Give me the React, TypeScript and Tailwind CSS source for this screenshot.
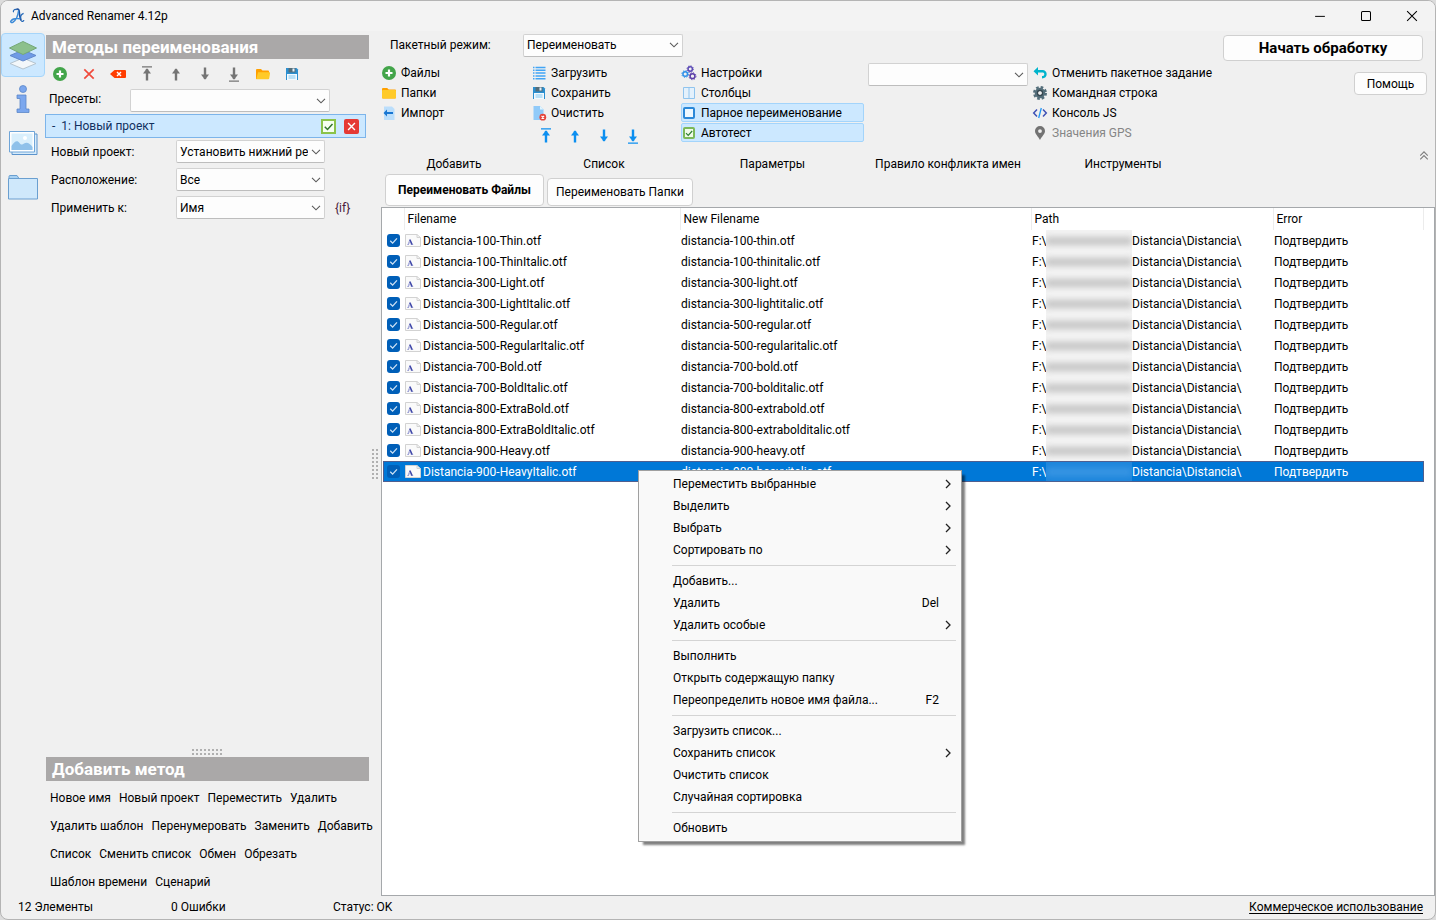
import React, { useState } from "react";

const files = [
  "Distancia-100-Thin.otf",
  "Distancia-100-ThinItalic.otf",
  "Distancia-300-Light.otf",
  "Distancia-300-LightItalic.otf",
  "Distancia-500-Regular.otf",
  "Distancia-500-RegularItalic.otf",
  "Distancia-700-Bold.otf",
  "Distancia-700-BoldItalic.otf",
  "Distancia-800-ExtraBold.otf",
  "Distancia-800-ExtraBoldItalic.otf",
  "Distancia-900-Heavy.otf",
  "Distancia-900-HeavyItalic.otf",
];

const methodRows = [
  ["Новое имя", "Новый проект", "Переместить", "Удалить"],
  ["Удалить шаблон", "Перенумеровать", "Заменить", "Добавить"],
  ["Список", "Сменить список", "Обмен", "Обрезать"],
  ["Шаблон времени", "Сценарий"],
];

type MenuEntry = { label: string; sub?: boolean; keys?: string };

const menuGroups: MenuEntry[][] = [
  [
    { label: "Переместить выбранные", sub: true },
    { label: "Выделить", sub: true },
    { label: "Выбрать", sub: true },
    { label: "Сортировать по", sub: true },
  ],
  [
    { label: "Добавить..." },
    { label: "Удалить", keys: "Del" },
    { label: "Удалить особые", sub: true },
  ],
  [
    { label: "Выполнить" },
    { label: "Открыть содержащую папку" },
    { label: "Переопределить новое имя файла...", keys: "F2" },
  ],
  [
    { label: "Загрузить список..." },
    { label: "Сохранить список", sub: true },
    { label: "Очистить список" },
    { label: "Случайная сортировка" },
  ],
  [{ label: "Обновить" }],
];

function Icon({ children, className = "size-4" }: { children: React.ReactNode; className?: string }) {
  return (
    <svg viewBox="0 0 16 16" className={`shrink-0 ${className}`} fill="none" aria-hidden="true">
      {children}
    </svg>
  );
}

const AppLogo = () => (
  <Icon>
    <path d="M7.2 1.600C8.600.4 10 1.200 10.200 3.200c.3 3.800.8 7 2 9.400" stroke="#1c4f9c" strokeWidth="1.600" />
    <path d="M9.600 2.500C9 7.500 6.600 12.600 3.800 14.300c-1.500.8-2.800-.4-1.700-1.600C3.600 11 7 10.200 11.400 10.800" stroke="#3b8ad8" strokeWidth="1.500" />
    <path d="M4.600 4.200C3.600 2.600 5.500 1 7.200 1.600M12.200 12.600c.7 1.400 2.600 1 2.600-.6M14.600 5.400c-2 .8-3.400 2.800-2.800 5.200" stroke="#2468b8" strokeWidth="1.200" />
  </Icon>
);

const AddIcon = () => (
  <Icon>
    <circle cx="8" cy="8" r="7" fill="#43a54a" />
    <path d="M8 4.500v7M4.500 8h7" stroke="#fff" strokeWidth="2.200" />
  </Icon>
);

const FolderIcon = () => (
  <Icon>
    <path d="M1 4a1 1 0 0 1 1-1h4.200l1.500 1.500H14a1 1 0 0 1 1 1V12.500a1 1 0 0 1-1 1H2a1 1 0 0 1-1-1z" fill="#ffa000" />
    <path d="M1 6a1 1 0 0 1 1-1h12a1 1 0 0 1 1 1v6.500a1 1 0 0 1-1 1H2a1 1 0 0 1-1-1z" fill="#ffca28" />
  </Icon>
);

const SaveIcon = () => (
  <Icon>
    <path d="M2 2h10.500L14 3.500V14H2z" fill="#2b8fd0" />
    <path d="M4.500 2h7v4.500h-7z" fill="#546e7a" />
    <path d="M8.500 2.500h2v3h-2z" fill="#e3f2fd" />
    <path d="M3 8h10v6H3z" fill="#f2faff" />
    <path d="M4.500 10h7M4.500 12h7" stroke="#81c7f0" />
  </Icon>
);

const OpenFolderIcon = () => (
  <Icon>
    <path d="M1 4a1 1 0 0 1 1-1h4l1.500 1.500H13a1 1 0 0 1 1 1V13H1z" fill="#ffa000" />
    <path d="M3 6.200h11.400c.5 0 .8.4.7.8L14.200 12.500c-.1.500-.5.800-1 .8H1.300z" fill="#ffca28" />
  </Icon>
);

// points up, flipped for down; bar is the "to the very end" line
function ArrowIcon({ down, bar, color }: { down?: boolean; bar?: boolean; color: string }) {
  return (
    <Icon className={down ? "size-4 rotate-180" : "size-4"}>
      <path d="M8 3v11.500" stroke={color} strokeWidth="2.400" />
      <path d="M4 7.500L8 2.200l4 5.300z" fill={color} />
      {bar && <path d="M3 .9h10" stroke={color} strokeWidth="1.200" />}
    </Icon>
  );
}

const ImportIcon = () => (
  <Icon>
    <path d="M3 1.500h8l2.500 2.500v11H3z" fill="#bbdefb" />
    <path d="M6 4.500L2.500 8 6 11.500V9h6V7H6z" fill="#1976d2" />
  </Icon>
);

const ListIcon = () => (
  <Icon>
    <path d="M4.500 2.500h10M4.500 5.300h10M4.500 8.100h10M4.500 10.900h10M4.500 13.700h10" stroke="#42a5f5" strokeWidth="1.500" />
    <path d="M2 2.500h1.500M2 5.300h1.500M2 8.100h1.500M2 10.900h1.500M2 13.700h1.500" stroke="#42a5f5" strokeWidth="1.500" />
  </Icon>
);

const ClearIcon = () => (
  <Icon>
    <path d="M2.500 1h6.500L12.500 4.500V15h-10z" fill="#90caf9" />
    <path d="M9 1v3.500h3.500z" fill="#e1f5fe" />
    <circle cx="11.800" cy="12.200" r="3.400" fill="#e5453b" />
    <path d="M10.500 10.900l2.600 2.600M13.100 10.900l-2.600 2.600" stroke="#fff" strokeWidth="1.200" />
  </Icon>
);

const SettingsIcon = () => (
  <Icon>
    <circle cx="4.200" cy="9" r="2.300" stroke="#2f8fe8" strokeWidth="1.500" />
    <circle cx="4.200" cy="9" r="3.400" stroke="#2f8fe8" strokeDasharray="1.200 1.470" />
    <circle cx="9.200" cy="4" r="2.200" stroke="#5c4bb5" strokeWidth="1.500" />
    <circle cx="9.200" cy="4" r="3.200" stroke="#5c4bb5" strokeDasharray="1.200 1.310" />
    <circle cx="11.500" cy="11.200" r="2.400" stroke="#5c3fa8" strokeWidth="1.500" />
    <circle cx="11.500" cy="11.200" r="3.500" stroke="#5c3fa8" strokeDasharray="1.200 1.550" />
  </Icon>
);

const ColumnsIcon = () => (
  <Icon>
    <path d="M2.500 2.500h11v11h-11zM8 2.500v11" fill="#e4f1fc" stroke="#90c4ee" />
  </Icon>
);

const UndoIcon = () => (
  <Icon>
    <path d="M1.500 6.200L6 2v2.900h4.500c2.500 0 4.200 1.700 4.200 4.200s-1.700 4.400-4.700 4.400v-2.400c1.400 0 2.300-.7 2.300-1.900s-.8-1.800-1.900-1.800H6v3z" fill="#00b4cc" />
  </Icon>
);

const GearIcon = () => (
  <Icon>
    <circle cx="8" cy="8" r="5.800" stroke="#546e7a" strokeWidth="2.400" strokeDasharray="2.600 1.950" />
    <circle cx="8" cy="8" r="3.700" stroke="#546e7a" strokeWidth="3.200" />
    <circle cx="8" cy="8" r="2.600" stroke="#37474f" strokeWidth="1.200" />
  </Icon>
);

const CodeIcon = () => (
  <Icon>
    <path d="M5 4.500L1.700 8 5 11.500M11 4.500L14.300 8 11 11.500" stroke="#3f51b5" strokeWidth="1.500" />
    <path d="M9.300 3L6.700 13" stroke="#2196f3" strokeWidth="1.300" />
  </Icon>
);

const PinIcon = () => (
  <Icon>
    <path d="M8 1a5 5 0 0 0-5 5c0 3.300 3.300 5.300 5 9 1.700-3.700 5-5.700 5-9a5 5 0 0 0-5-5zm0 3.200a1.900 1.900 0 1 1 0 3.800 1.900 1.900 0 0 1 0-3.800z" fill="#737373" fillRule="evenodd" />
  </Icon>
);

function Chevron() {
  return (
    <svg viewBox="0 0 10 6" className="pointer-events-none col-start-1 row-start-1 mr-1 h-[6px] w-[10px] justify-self-end self-center" fill="none">
      <path d="M1 .8l4 4 4-4" stroke="#5a5a5a" strokeWidth="1.100" />
    </svg>
  );
}

function Select({ id, value, className, label }: { id: string; value: string; className: string; label?: string }) {
  return (
    <span className={`grid ${className}`}>
      <select
        id={id}
        aria-label={label}
        className="col-start-1 row-start-1 h-[23px] w-full appearance-none rounded-xs border border-[#d2d2d2] border-b-[#bdbdbd] bg-[#fdfdfd] pl-[3px] pr-4 text-black"
      >
        <option>{value}</option>
      </select>
      <Chevron />
    </span>
  );
}

function CheckBox({ label, look, tick, checked = true, size }: { label?: string; look: string; tick: string; checked?: boolean; size: string }) {
  const [on, setOn] = useState(checked);
  return (
    <span className="inline-grid shrink-0 place-items-center align-middle">
      <input
        type="checkbox"
        aria-label={label}
        checked={on}
        onChange={() => setOn(!on)}
        className={`col-start-1 row-start-1 appearance-none ${size} ${look}`}
      />
      {on && (
        <svg viewBox="0 0 12 12" className={`pointer-events-none col-start-1 row-start-1 ${size}`} fill="none">
          <path d="M3 6.200l2.200 2.200L9.200 4" stroke={tick} strokeWidth="1.200" />
        </svg>
      )}
    </span>
  );
}

function ToolItem({ icon, text, muted }: { icon: React.ReactNode; text: string; muted?: boolean }) {
  return (
    <button disabled={muted} className={`flex h-5 items-center gap-1 whitespace-nowrap ${muted ? "text-[#858585]" : ""}`}>
      {icon}
      {text}
    </button>
  );
}

function ToolGroup({ title, className, children }: { title: string; className: string; children: React.ReactNode }) {
  return (
    <section className={`flex h-full flex-col ${className}`}>
      <div className="flex flex-1 flex-col">{children}</div>
      <h3 className="text-center leading-5 whitespace-nowrap">{title}</h3>
    </section>
  );
}

function RailIcons() {
  return (
    <nav className="flex w-11 shrink-0 flex-col pt-[2px]">
      <button aria-label="Методы" className="grid h-11 place-items-center rounded-sm border border-[#a6d5fa] bg-[#cce8ff]">
        <svg viewBox="0 0 30 32" className="h-8 w-[30px]">
          <path d="M15 19l13 5.500L15 30 2 24.500z" fill="#f3f7fa" stroke="#b5c4cf" />
          <path d="M15 11l13 5.500L15 22 2 16.500z" fill="#6f9be6" stroke="#6288cc" />
          <path d="M15 2.500L28.500 9 15 15.500 1.500 9z" fill="#8cc08d" stroke="#74a877" />
        </svg>
      </button>
      <button aria-label="Информация" className="grid h-11 place-items-center">
        <svg viewBox="0 0 14 28" className="h-7 w-[14px]" fill="#7ba7ee" stroke="#5b87c8" strokeWidth=".8">
          <circle cx="7" cy="4" r="3.500" />
          <path d="M1 10h9v14h3v3.500H1V24h3V13.500H1z" />
        </svg>
      </button>
      <button aria-label="Изображения" className="grid h-11 place-items-center">
        <svg viewBox="0 0 30 26" className="h-[26px] w-[30px]" fill="none">
          <path d="M4 4h25v20.500H4z" fill="#d7ebfa" stroke="#5b93cc" />
          <path d="M1.500 1.500h25v20.500h-25z" fill="#fff" stroke="#6fa5d8" />
          <path d="M3.500 3.500h21v16.500h-21z" fill="#d9effc" />
          <path d="M3.500 16c3-5 6-6 8-3 1.500 2 3 2 4.500.5 3-2 6 0 8.500 3.500v3h-21z" fill="#8fc1ea" />
          <circle cx="17" cy="8" r="2" fill="#fff" />
        </svg>
      </button>
      <button aria-label="Папка" className="grid h-11 place-items-center">
        <svg viewBox="0 0 30 26" className="h-[26px] w-[30px]" fill="none" stroke="#6a9fd0">
          <path d="M1 4.500V2.500c0-.6.400-1 1-1h7l2 3z" fill="#a9d2f3" />
          <path d="M.5 4.500h29V25H.5z" fill="#cfe8fb" />
        </svg>
      </button>
    </nav>
  );
}

function MethodsPanel() {
  const [preset] = useState("");
  return (
    <aside className="flex w-[324px] shrink-0 flex-col">
      <h2 className="mt-1 ml-px h-6 bg-[#aaa8a8] pl-[6px] text-[17px] leading-6 font-bold text-white">Методы переименования</h2>
      <div className="flex h-[29px] items-center">
        <button aria-label="Добавить" className="flex w-[29px] justify-center"><AddIcon /></button>
        <button aria-label="Удалить" className="flex w-[29px] justify-center">
          <Icon><path d="M3.300 3.300l9.400 9.400M12.700 3.300l-9.400 9.400" stroke="#f04a3c" strokeWidth="1.700" /></Icon>
        </button>
        <button aria-label="Удалить все" className="flex w-[29px] justify-center">
          <Icon>
            <path d="M0 8l4.500-4H15a1 1 0 0 1 1 1v6a1 1 0 0 1-1 1H4.500z" fill="#ff3d00" />
            <path d="M7 6l4 4M11 6l-4 4" stroke="#fff" strokeWidth="1.400" />
          </Icon>
        </button>
        <button aria-label="В начало" className="flex w-[29px] justify-center"><ArrowIcon bar color="#757575" /></button>
        <button aria-label="Вверх" className="flex w-[29px] justify-center"><ArrowIcon color="#757575" /></button>
        <button aria-label="Вниз" className="flex w-[29px] justify-center"><ArrowIcon down color="#757575" /></button>
        <button aria-label="В конец" className="flex w-[29px] justify-center"><ArrowIcon down bar color="#757575" /></button>
        <button aria-label="Открыть" className="flex w-[29px] justify-center"><OpenFolderIcon /></button>
        <button aria-label="Сохранить" className="flex w-[29px] justify-center"><SaveIcon /></button>
      </div>
      <div className="flex h-[26px] items-start justify-between pt-px pl-1 pr-[39px]">
        <label htmlFor="preset" className="leading-5">Пресеты:</label>
        <Select id="preset" value={preset} className="w-[200px]" />
      </div>
      <div className="mr-[3px] flex h-6 items-center gap-2 border border-[#7cb4ea] bg-[#cce8ff] pr-[6px] pl-[6px] text-[#12305e]">
        <span className="flex-1 whitespace-pre">-  1: Новый проект</span>
        <CheckBox label="Включить метод" size="size-[15px]" look="border-2 border-[#8bc34a] bg-[#f6fff0]" tick="#33752c" />
        <button aria-label="Удалить метод" className="grid size-[15px] place-items-center rounded-xs bg-[#e53935]">
          <Icon className="size-[11px]"><path d="M3 3l10 10M13 3L3 13" stroke="#fff" strokeWidth="2" /></Icon>
        </button>
      </div>
      <div className="flex flex-col gap-[5px] pt-[2px] pl-[6px]">
        <div className="flex h-[23px] items-center">
          <label htmlFor="case" className="w-[125px]">Новый проект:</label>
          <Select id="case" value="Установить нижний ре" className="w-[149px]" />
        </div>
        <div className="flex h-[23px] items-center">
          <label htmlFor="place" className="w-[125px]">Расположение:</label>
          <Select id="place" value="Все" className="w-[149px]" />
        </div>
        <div className="flex h-[23px] items-center">
          <label htmlFor="apply" className="w-[125px]">Применить к:</label>
          <Select id="apply" value="Имя" className="w-[149px]" />
          <button className="ml-[10px] text-[#4a1a3a]">{"{if}"}</button>
        </div>
      </div>

      {/* Add method */}
      <div className="mt-auto h-2 w-8 self-center bg-[radial-gradient(#b0b0b0_1px,transparent_1px)] bg-[size:4px_4px]" />
      <h2 className="mt-px ml-px h-6 bg-[#aaa8a8] pl-[6px] text-[17px] leading-6 font-bold text-white">Добавить метод</h2>
      <div className="pt-[3px] pl-[5px]">
        {methodRows.map((row, i) => (
          <div key={i} className="flex h-7 items-center gap-2 whitespace-nowrap">
            {row.map((m) => (
              <button key={m}>{m}</button>
            ))}
          </div>
        ))}
      </div>
    </aside>
  );
}

function Ribbon() {
  return (
    <header className="flex">
      <div className="flex-1">
        <div className="mb-1 flex h-7 items-center pl-[9px]">
          <label htmlFor="mode" className="w-[133px] whitespace-nowrap">Пакетный режим:</label>
          <Select id="mode" value="Переименовать" className="w-[160px]" />
        </div>
        <div className="flex h-[111px] gap-1">
          <ToolGroup title="Добавить" className="w-[146px]">
            <ToolItem icon={<AddIcon />} text="Файлы" />
            <ToolItem icon={<FolderIcon />} text="Папки" />
            <ToolItem icon={<ImportIcon />} text="Импорт" />
          </ToolGroup>
          <ToolGroup title="Список" className="w-[146px]">
            <ToolItem icon={<ListIcon />} text="Загрузить" />
            <ToolItem icon={<SaveIcon />} text="Сохранить" />
            <ToolItem icon={<ClearIcon />} text="Очистить" />
            <div className="flex h-[26px] items-center">
              <button aria-label="В начало списка" className="flex w-[29px] justify-center"><ArrowIcon bar color="#0c8ff0" /></button>
              <button aria-label="Выше" className="flex w-[29px] justify-center"><ArrowIcon color="#0c8ff0" /></button>
              <button aria-label="Ниже" className="flex w-[29px] justify-center"><ArrowIcon down color="#0c8ff0" /></button>
              <button aria-label="В конец списка" className="flex w-[29px] justify-center"><ArrowIcon down bar color="#0c8ff0" /></button>
            </div>
          </ToolGroup>
          <ToolGroup title="Параметры" className="w-[183px]">
            <ToolItem icon={<SettingsIcon />} text="Настройки" />
            <ToolItem icon={<ColumnsIcon />} text="Столбцы" />
            <label className="mb-px flex h-[19px] items-center gap-[6px] rounded-xs border border-[#a3d4fb] bg-[#cce8ff] pl-px">
              <CheckBox checked={false} size="size-3" look="rounded-xs border-2 border-[#2b88d8] bg-[#eef8ff]" tick="#1565c0" />
              Парное переименование
            </label>
            <label className="mb-px flex h-[19px] items-center gap-[6px] rounded-xs border border-[#a3d4fb] bg-[#cce8ff] pl-px">
              <CheckBox size="size-3" look="rounded-xs border-2 border-[#7cb95a] bg-[#f0fbe8]" tick="#2e7d32" />
              Автотест
            </label>
          </ToolGroup>
          <ToolGroup title="Правило конфликта имен" className="w-[160px]">
            <Select id="conflict" value="" label="Правило конфликта имен" className="w-full" />
          </ToolGroup>
          <ToolGroup title="Инструменты" className="w-[182px]">
            <ToolItem icon={<UndoIcon />} text="Отменить пакетное задание" />
            <ToolItem icon={<GearIcon />} text="Командная строка" />
            <ToolItem icon={<CodeIcon />} text="Консоль JS" />
            <ToolItem icon={<PinIcon />} text="Значения GPS" muted />
          </ToolGroup>
        </div>
      </div>
      <div className="flex flex-col items-end pt-1">
        <button className="mr-3 h-[26px] w-[200px] rounded-sm border border-[#d0d0d0] bg-[#fdfdfd] text-[15px] font-bold">Начать обработку</button>
        <button className="mt-[11px] mr-2 h-[23px] w-[73px] rounded-sm border border-[#d0d0d0] bg-[#fdfdfd]">Помощь</button>
        <button aria-label="Свернуть" className="mt-auto mr-[5px] mb-3">
          <Icon className="size-3"><path d="M3 7.500l5-5 5 5M3 12.500l5-5 5 5" stroke="#7d7d7d" strokeWidth="1.500" /></Icon>
        </button>
      </div>
    </header>
  );
}

function FileTable() {
  return (
    <div className="pr-[10px] pl-px">
      <table className="w-full table-fixed border-collapse text-left whitespace-nowrap">
        <colgroup>
          <col className="w-[21px]" />
          <col className="w-[276px]" />
          <col className="w-[351px]" />
          <col className="w-[242px]" />
          <col />
        </colgroup>
        <thead>
          <tr className="h-[22px]">
            <th className="border-r border-[#ececec] p-0" />
            <th className="border-r border-[#ececec] p-0 pl-[3px] font-normal">Filename</th>
            <th className="border-r border-[#ececec] p-0 pl-[3px] font-normal">New Filename</th>
            <th className="border-r border-[#ececec] p-0 pl-[3px] font-normal">Path</th>
            <th className="border-r border-[#ececec] p-0 pl-[3px] font-normal">Error</th>
          </tr>
        </thead>
        <tbody>
          {files.map((name, i) => {
            const active = i === files.length - 1;
            return (
              <tr key={name} className={`h-[21px] ${active ? "bg-[#0078d7] text-white outline-1 -outline-offset-1 outline-[#4f5f8f]" : ""}`}>
                <td className="p-0 pl-1">
                  <span className="flex">
                    <CheckBox label={name} size="size-[13px]" look="rounded-[3px] bg-[#005fb8]" tick="#cfe3f5" />
                  </span>
                </td>
                <td className="p-0">
                  <span className="flex items-center gap-[2px] pl-px">
                    <svg viewBox="0 0 16 13" className="h-[13px] w-4" fill="none">
                      <path d="M.5.500h11.500l3.500 3v9H.5z" fill="#fafafa" stroke="#d2d2d2" />
                      <path d="M12 .5v3h3.500" stroke="#d2d2d2" />
                      <path d="M3 10.500L4.800 6M3.800 8.900h3M2.400 10.500h1.600M5.800 10.500h2.400" stroke="#8a8fce" strokeWidth=".8" />
                      <path d="M4.800 5.500l2.300 5" stroke="#3f47a8" strokeWidth="1.500" />
                    </svg>
                    {name}
                  </span>
                </td>
                <td className="p-0 pl-px">{name.toLowerCase()}</td>
                <td className="p-0 pl-px">
                  <span className="flex h-[21px] items-center">
                    <span className="w-[14px]">{"F:\\"}</span>
                    <span className={`flex h-[21px] w-[86px] items-center overflow-hidden ${active ? "bg-[#1d86dc]" : "bg-[#f3f3f3]"}`}>
                      <span className={`h-2 w-full blur-[3px] ${active ? "bg-[#3a96e4]" : "bg-[#c4c4c4]"}`} />
                    </span>
                    {"Distancia\\Distancia\\"}
                  </span>
                </td>
                <td className="p-0 pl-px">Подтвердить</td>
              </tr>
            );
          })}
        </tbody>
      </table>
    </div>
  );
}

function ContextMenu() {
  return (
    <div role="menu" className="absolute top-[262px] left-[256px] w-[324px] border border-[#a0a0a0] bg-[#f9f9f9] py-[2px] shadow-[4px_4px_2px_-1px_rgba(0,0,0,0.5)]">
      {menuGroups.map((group, g) => (
        <div key={g}>
          {g > 0 && <hr className="mt-1 mr-[5px] mb-1 ml-[33px] border-[#d4d4d4]" />}
          {group.map((item) => (
            <button key={item.label} role="menuitem" className="flex h-[22px] w-full items-center justify-between pr-[9px] pl-[34px] text-left">
              {item.label}
              {item.keys && <span className="mr-[13px]">{item.keys}</span>}
              {item.sub && (
                <svg viewBox="0 0 8 10" className="h-[10px] w-2" fill="none">
                  <path d="M2 1l4 4-4 4" stroke="#222" strokeWidth="1.300" />
                </svg>
              )}
            </button>
          ))}
        </div>
      ))}
    </div>
  );
}

export default function App() {
  return (
    <div className="bg-[#dcdcdc] font-['Roboto','Open_Sans',sans-serif] text-[12px] leading-4 text-black">
      <div className="flex min-h-screen flex-col overflow-hidden rounded-lg border border-[#b4b4b4] bg-[#f0f0f0]">
        {/* Title bar */}
        <div className="flex h-[30px] shrink-0 items-center bg-[#f3f3f3] pl-2">
          <AppLogo />
          <h1 className="ml-[6px] flex-1">Advanced Renamer 4.12p</h1>
          <button aria-label="Свернуть окно" className="grid w-[46px] place-items-center">
            <Icon className="size-3"><path d="M1.500 8.500h13" stroke="#000" strokeWidth="1.300" /></Icon>
          </button>
          <button aria-label="Развернуть" className="grid w-[46px] place-items-center">
            <Icon className="size-3"><rect x="2" y="2" width="12" height="12" rx="1.500" stroke="#000" strokeWidth="1.400" /></Icon>
          </button>
          <button aria-label="Закрыть" className="grid w-[46px] place-items-center">
            <Icon className="size-3"><path d="M1.500 1.500l13 13M14.500 1.500l-13 13" stroke="#000" strokeWidth="1.400" /></Icon>
          </button>
        </div>

        <div className="flex flex-1">
          <RailIcons />
          <MethodsPanel />
          <div className="flex w-3 shrink-0 items-center justify-center">
            <span className="h-8 w-2 bg-[radial-gradient(#b0b0b0_1px,transparent_1px)] bg-[size:4px_4px]" />
          </div>
          <main className="flex min-w-0 flex-1 flex-col">
            <Ribbon />
            <div className="flex h-8 items-end gap-[3px] pl-1">
              <button className="h-8 w-[159px] rounded-sm border border-[#d0d0d0] bg-[#fdfdfd] font-bold whitespace-nowrap">Переименовать Файлы</button>
              <button className="h-7 w-[146px] rounded-sm border border-[#d0d0d0] bg-[#fdfdfd] whitespace-nowrap">Переименовать Папки</button>
            </div>
            <div className="relative mt-px flex-1 border border-[#a5a8ab] bg-white">
              <FileTable />
              <ContextMenu />
            </div>
          </main>
        </div>

        {/* Status bar */}
        <footer className="flex h-[23px] shrink-0 items-center pr-3 pb-px pl-[17px]">
          <span className="w-[153px]">12 Элементы</span>
          <span className="w-[162px]">0 Ошибки</span>
          <span className="flex-1">Статус: OK</span>
          <a href="#license" className="underline underline-offset-2">Коммерческое использование</a>
        </footer>
      </div>
    </div>
  );
}
